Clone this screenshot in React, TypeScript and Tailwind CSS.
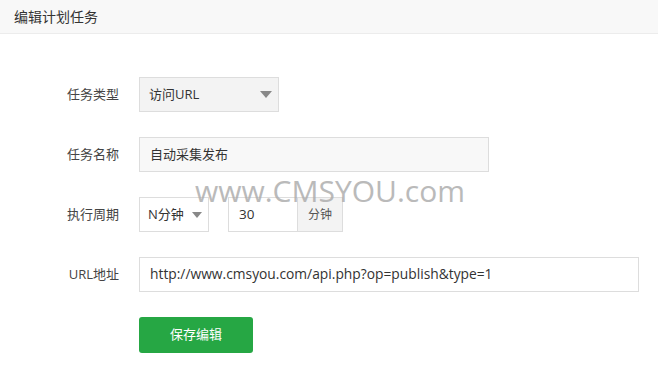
import React from "react";

const font = { fontFamily: '"Open Sans", "Noto Sans CJK SC", sans-serif' };

function Arrow({ small }: { small?: boolean }) {
  return (
    <svg
      width={small ? 10 : 12}
      height={small ? 6 : 7}
      viewBox="0 0 12 7"
      className="shrink-0"
    >
      <path d="M0 0 L12 0 L6 7 Z" fill="#888" />
    </svg>
  );
}

function Row({ label, children }: { label: string; children: React.ReactNode }) {
  return (
    <div className="flex items-center">
      <div className="w-[119px] text-right text-[13px] text-[#444]">{label}</div>
      <div className="ml-[20px] flex items-center">{children}</div>
    </div>
  );
}

export default function App() {
  return (
    <div className="relative w-[658px] h-[371px] bg-white text-[#333]" style={font}>
      {/* Header */}
      <div className="h-[34px] bg-[#f8f8f8] border-b border-[#ececec] flex items-center px-[14px] text-[14px] text-[#333]">
        编辑计划任务
      </div>

      {/* Form */}
      <div className="flex flex-col gap-[25px] pt-[43px]">
        <Row label="任务类型">
          <div className="w-[140px] h-[35px] border border-[#ddd] bg-[#f3f3f3] flex items-center justify-between pl-[9px] pr-[6px] text-[13px]">
            <span>访问URL</span>
            <Arrow />
          </div>
        </Row>

        <Row label="任务名称">
          <div className="w-[350px] h-[35px] border border-[#ddd] bg-[#f8f8f8] flex items-center pl-[10px] text-[13px]">
            自动采集发布
          </div>
        </Row>

        <Row label="执行周期">
          <div className="w-[70px] h-[35px] border border-[#ddd] bg-white flex items-center justify-between pl-[8px] pr-[6px] text-[13px]">
            <span>N分钟</span>
            <Arrow small />
          </div>
          <div className="ml-[19px] w-[70px] h-[35px] border border-[#ddd] bg-white flex items-center pl-[10px] text-[13.5px]">
            30
          </div>
          <div className="w-[45px] h-[35px] border border-l-0 border-[#ddd] bg-[#f3f3f3] flex items-center justify-center text-[12px] text-[#555]">
            分钟
          </div>
        </Row>

        <Row label="URL地址">
          <div className="w-[500px] h-[35px] border border-[#ddd] bg-white flex items-center pl-[10px] text-[13.8px]">
            http://www.cmsyou.com/api.php?op=publish&amp;type=1
          </div>
        </Row>

        <div className="pl-[139px]">
          <button className="w-[114px] h-[36px] rounded-[3px] bg-[#26a744] text-white text-[13px]">
            保存编辑
          </button>
        </div>
      </div>

      {/* Watermark */}
      <div className="absolute left-[195px] top-[176px] text-[30px] leading-none text-[#aaaaaa] opacity-80 pointer-events-none">
        www.CMSYOU.com
      </div>
    </div>
  );
}
